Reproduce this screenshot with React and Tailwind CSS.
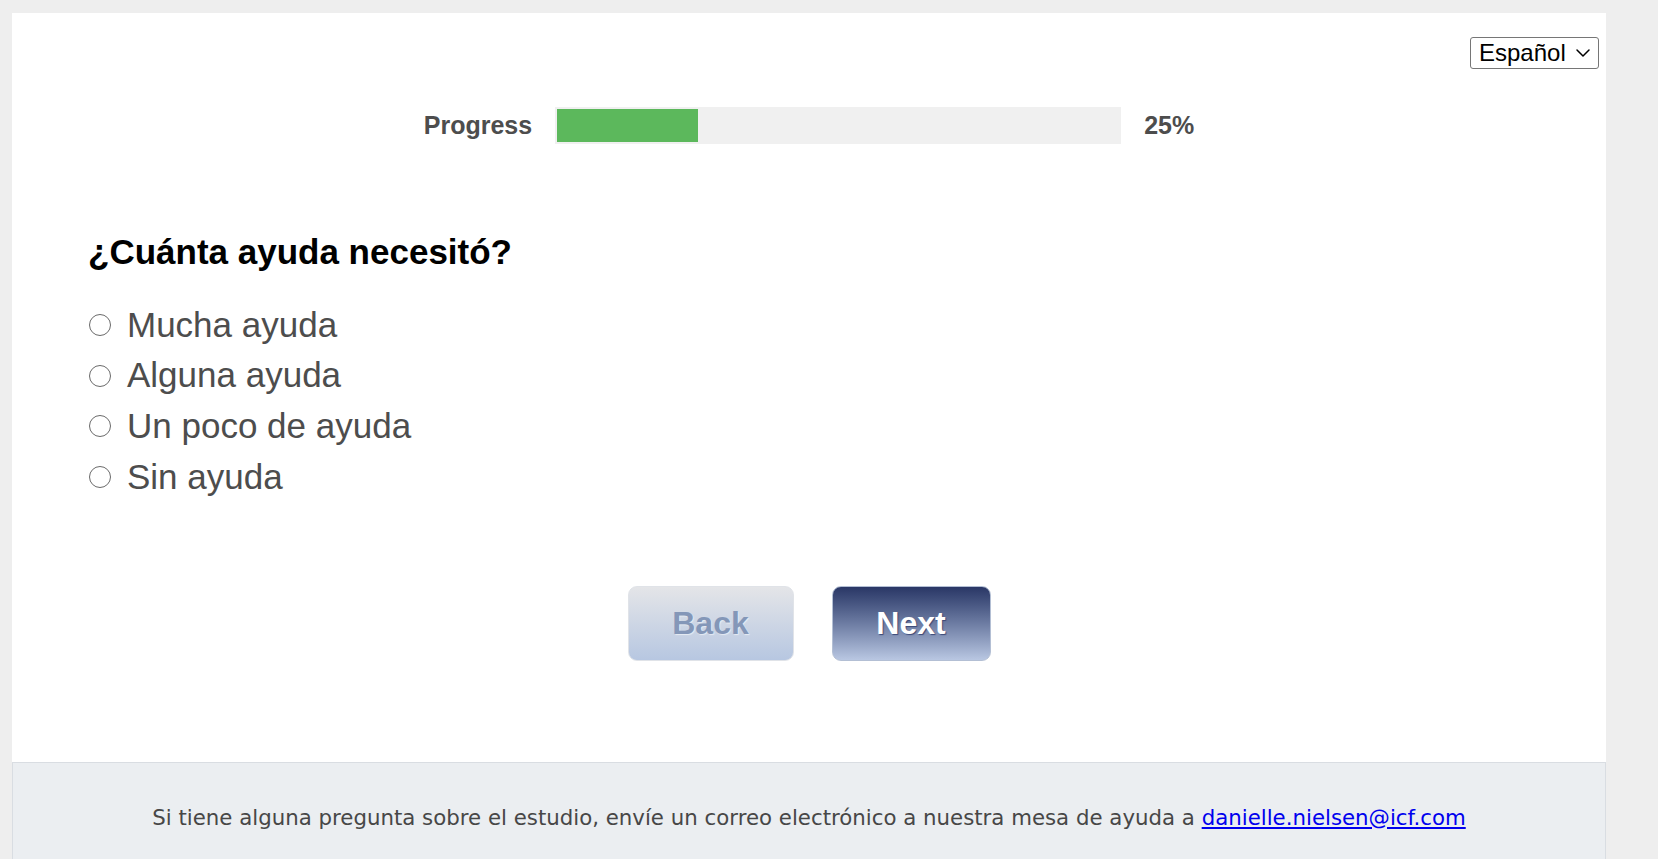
import { ChevronDown } from "lucide-react"

const options = ["Mucha ayuda", "Alguna ayuda", "Un poco de ayuda", "Sin ayuda"]

const App = () => {
    return (
        <div className="min-h-screen bg-[#eeeeee] pt-[13px] font-['Liberation_Sans',Arial,sans-serif]">
            <div className="ml-[12px] w-[1594px] bg-white">
                <div className="flex justify-end pt-[24px] pr-[7px]">
                    <div className="flex h-[32px] w-[129px] items-center justify-between rounded-[3px] border border-[#767676] pl-[8px] pr-[3px] text-[24px] text-black">
                        <span>Español</span>
                        <ChevronDown size={24} strokeWidth={1.5} />
                    </div>
                </div>

                <div className="mt-[38px] flex items-center justify-center">
                    <span className="text-[25px] font-bold text-[#4d4d4d]">Progress</span>
                    <div className="ml-[23px] h-[37px] w-[566px] bg-[#f0f0f0] p-[2px]">
                        <div className="h-full w-[25%] bg-[#5cb85c]"></div>
                    </div>
                    <span className="ml-[23px] text-[25px] font-bold text-[#4d4d4d]">25%</span>
                </div>

                <h2 className="mt-[87px] pl-[76px] text-[35px] font-bold leading-[40px] text-black">¿Cuánta ayuda necesitó?</h2>

                <div className="mt-[28px] pl-[77px]">
                    {options.map((o) => (
                        <label key={o} className="flex h-[50.8px] items-center">
                            <span className="h-[22px] w-[22px] rounded-full border-[1.5px] border-[#6a6a6a]"></span>
                            <span className="ml-[16px] text-[35px] text-[#4d4d4d]">{o}</span>
                        </label>
                    ))}
                </div>

                <div className="mt-[83px] flex justify-center gap-[38px] pb-[101px]">
                    <button className="h-[75px] w-[166px] rounded-[9px] border border-[#e0e3e8] bg-gradient-to-b from-[#e4e5e8] to-[#b7c7e1] text-[32px] font-bold text-[#8497b8] [text-shadow:1px_1px_1px_#e6ebf3]">
                        Back
                    </button>
                    <button className="h-[75px] w-[159px] rounded-[9px] border border-[#b3bfd4] bg-gradient-to-b from-[#2a3766] to-[#b9c7e2] text-[32px] font-bold text-white [text-shadow:1px_1px_1px_#3b4877]">
                        Next
                    </button>
                </div>

                <footer className="border border-[#d9dde2] bg-[#ebeef1] pt-[39px] pb-[46px] text-center font-['DejaVu_Sans',sans-serif] text-[21.3px] text-[#474747]">
                    Si tiene alguna pregunta sobre el estudio, envíe un correo electrónico a nuestra mesa de ayuda a{" "}
                    <a href="#" className="text-[#0000ee] underline">danielle.nielsen@icf.com</a>
                </footer>
            </div>
        </div>
    )
}

export default App
